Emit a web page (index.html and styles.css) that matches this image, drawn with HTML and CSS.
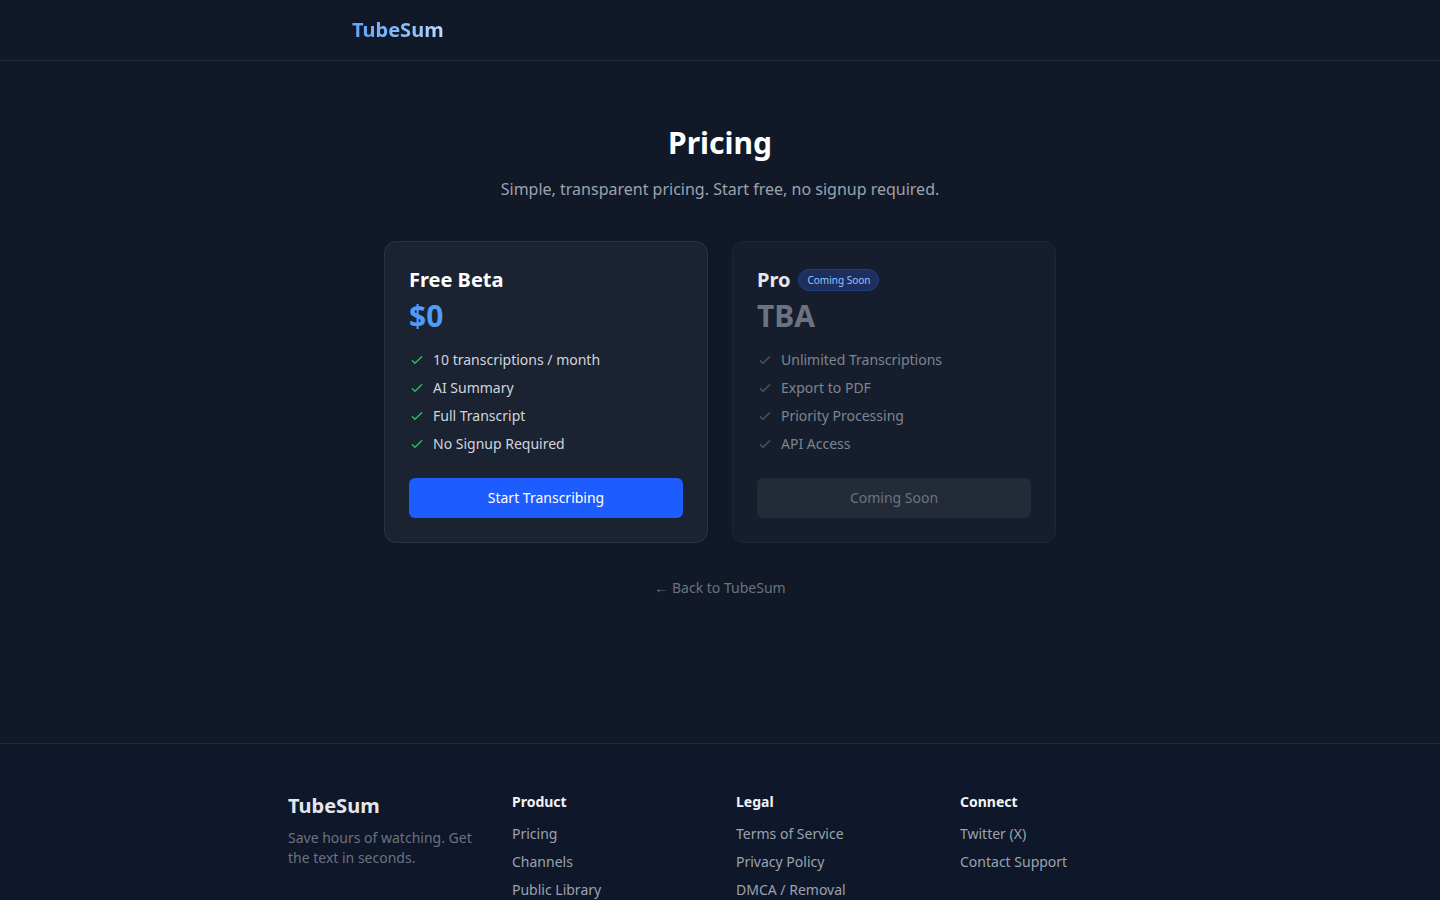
FILE: index.html
```html
<!DOCTYPE html>
<html lang="en">
<head>
<meta charset="utf-8">
<title>Pricing - TubeSum</title>
<link rel="stylesheet" href="styles.css">
</head>
<body>
<header class="topbar">
  <div class="topbar-inner">
    <a class="logo" href="#">TubeSum</a>
  </div>
</header>
<main class="main">
  <h1 class="title">Pricing</h1>
  <p class="subtitle">Simple, transparent pricing. Start free, no signup required.</p>
  <div class="plans">
    <section class="card">
      <div class="plan-head"><h2 class="plan-name">Free Beta</h2></div>
      <div class="price price-free">$0</div>
      <ul class="features">
        <li><svg class="check check-green" viewBox="0 0 24 24"><path d="M5 13l4 4L19 7"/></svg>10 transcriptions / month</li>
        <li><svg class="check check-green" viewBox="0 0 24 24"><path d="M5 13l4 4L19 7"/></svg>AI Summary</li>
        <li><svg class="check check-green" viewBox="0 0 24 24"><path d="M5 13l4 4L19 7"/></svg>Full Transcript</li>
        <li><svg class="check check-green" viewBox="0 0 24 24"><path d="M5 13l4 4L19 7"/></svg>No Signup Required</li>
      </ul>
      <a class="btn btn-primary" href="#">Start Transcribing</a>
    </section>
    <section class="card card-muted">
      <div class="plan-head"><h2 class="plan-name">Pro</h2><span class="badge">Coming Soon</span></div>
      <div class="price price-tba">TBA</div>
      <ul class="features features-muted">
        <li><svg class="check check-gray" viewBox="0 0 24 24"><path d="M5 13l4 4L19 7"/></svg>Unlimited Transcriptions</li>
        <li><svg class="check check-gray" viewBox="0 0 24 24"><path d="M5 13l4 4L19 7"/></svg>Export to PDF</li>
        <li><svg class="check check-gray" viewBox="0 0 24 24"><path d="M5 13l4 4L19 7"/></svg>Priority Processing</li>
        <li><svg class="check check-gray" viewBox="0 0 24 24"><path d="M5 13l4 4L19 7"/></svg>API Access</li>
      </ul>
      <span class="btn btn-disabled">Coming Soon</span>
    </section>
  </div>
  <a class="back" href="#"><span class="arrow">←</span> Back to TubeSum</a>
</main>
<footer class="footer">
  <div class="footer-inner">
    <div class="fcol">
      <div class="flogo">TubeSum</div>
      <p class="ftag">Save hours of watching. Get the text in seconds.</p>
    </div>
    <div class="fcol">
      <h3 class="fhead">Product</h3>
      <ul class="flinks"><li><a href="#">Pricing</a></li><li><a href="#">Channels</a></li><li><a href="#">Public Library</a></li></ul>
    </div>
    <div class="fcol">
      <h3 class="fhead">Legal</h3>
      <ul class="flinks"><li><a href="#">Terms of Service</a></li><li><a href="#">Privacy Policy</a></li><li><a href="#">DMCA / Removal</a></li></ul>
    </div>
    <div class="fcol">
      <h3 class="fhead">Connect</h3>
      <ul class="flinks"><li><a href="#">Twitter (X)</a></li><li><a href="#">Contact Support</a></li></ul>
    </div>
  </div>
</footer>
</body>
</html>
```
FILE: styles.css
```css
* { box-sizing: border-box; }
html, body { margin: 0; padding: 0; }
body {
  background: #111827;
  color: #f3f4f6;
  font-family: "Noto Sans", "Open Sans", sans-serif;
  min-height: 100vh;
}
a { text-decoration: none; color: inherit; }
ul { list-style: none; margin: 0; padding: 0; }
h1, h2, h3, p { margin: 0; }

.topbar {
  height: 61px;
  border-bottom: 1px solid #1f2937;
}
.topbar-inner {
  max-width: 768px;
  margin: 0 auto;
  padding: 0 16px;
  height: 60px;
  display: flex;
  align-items: center;
}
.logo {
  font-size: 20px;
  font-weight: 700;
  background: linear-gradient(90deg, #60a5fa, #93c5fd 70%, #bfdbfe);
  -webkit-background-clip: text;
  background-clip: text;
  color: transparent;
  line-height: 28px;
}

.main {
  padding: 64px 16px 0;
  min-height: 682px;
  display: flex;
  flex-direction: column;
  align-items: center;
}
.title {
  font-size: 30px;
  line-height: 36px;
  font-weight: 700;
  color: #ffffff;
}
.subtitle {
  margin-top: 16px;
  font-size: 16px;
  line-height: 24px;
  color: #9ca3af;
}
.plans {
  margin-top: 40px;
  width: 672px;
  display: grid;
  grid-template-columns: 1fr 1fr;
  gap: 24px;
}
.card {
  background: #1b2333;
  border: 1px solid #283242;
  border-radius: 12px;
  padding: 24px;
}
.card-muted {
  background: #161e2d;
  border-color: #1f2838;
}
.plan-head {
  display: flex;
  align-items: center;
  gap: 8px;
  height: 28px;
}
.plan-name {
  font-size: 20px;
  line-height: 28px;
  font-weight: 700;
  color: #ffffff;
}
.card-muted .plan-name { color: #e5e7eb; }
.badge {
  font-size: 10px;
  line-height: 16px;
  padding: 2px 8px;
  border-radius: 9999px;
  background: #1e2f5e;
  border: 1px solid #1e3a8a;
  color: #93c5fd;
}
.price {
  margin-top: 4px;
  font-size: 30px;
  line-height: 36px;
  font-weight: 700;
}
.price-free { color: #4f9cf9; }
.price-tba { color: #6b7280; }
.features {
  margin-top: 16px;
  display: flex;
  flex-direction: column;
  gap: 8px;
}
.features li {
  display: flex;
  align-items: center;
  gap: 8px;
  font-size: 14px;
  line-height: 20px;
  color: #d1d5db;
}
.features-muted li { color: #7d8491; }
.check {
  width: 16px;
  height: 16px;
  fill: none;
  stroke-width: 2;
  stroke-linecap: round;
  stroke-linejoin: round;
  flex: none;
}
.check-green { stroke: #22c55e; }
.check-gray { stroke: #4b5563; }
.btn {
  margin-top: 24px;
  display: flex;
  align-items: center;
  justify-content: center;
  height: 40px;
  padding-bottom: 1px;
  border-radius: 6px;
  font-size: 14px;
  line-height: 20px;
}
.btn-primary { background: #1d5cff; color: #ffffff; }
.btn-disabled { background: #232b39; color: #6b7280; }
.back {
  margin-top: 35px;
  font-size: 14px;
  line-height: 20px;
  color: #6b7280;
}
.arrow { font-size: 14px; }

.footer {
  border-top: 1px solid #1f2937;
  background: #0f172a;
  padding-top: 48px;
}
.footer-inner {
  max-width: 896px;
  margin: 0 auto;
  padding: 0 16px 48px;
  display: grid;
  grid-template-columns: repeat(4, 1fr);
  gap: 32px;
}
.flogo {
  font-size: 20px;
  line-height: 28px;
  font-weight: 700;
  color: #e5e7eb;
}
.ftag {
  margin-top: 8px;
  font-size: 14px;
  line-height: 20px;
  color: #6b7280;
}
.fhead {
  font-size: 14px;
  line-height: 20px;
  font-weight: 700;
  color: #f3f4f6;
}
.flinks {
  margin-top: 12px;
  display: flex;
  flex-direction: column;
  gap: 8px;
}
.flinks li { font-size: 14px; line-height: 20px; color: #9ca3af; }
```
